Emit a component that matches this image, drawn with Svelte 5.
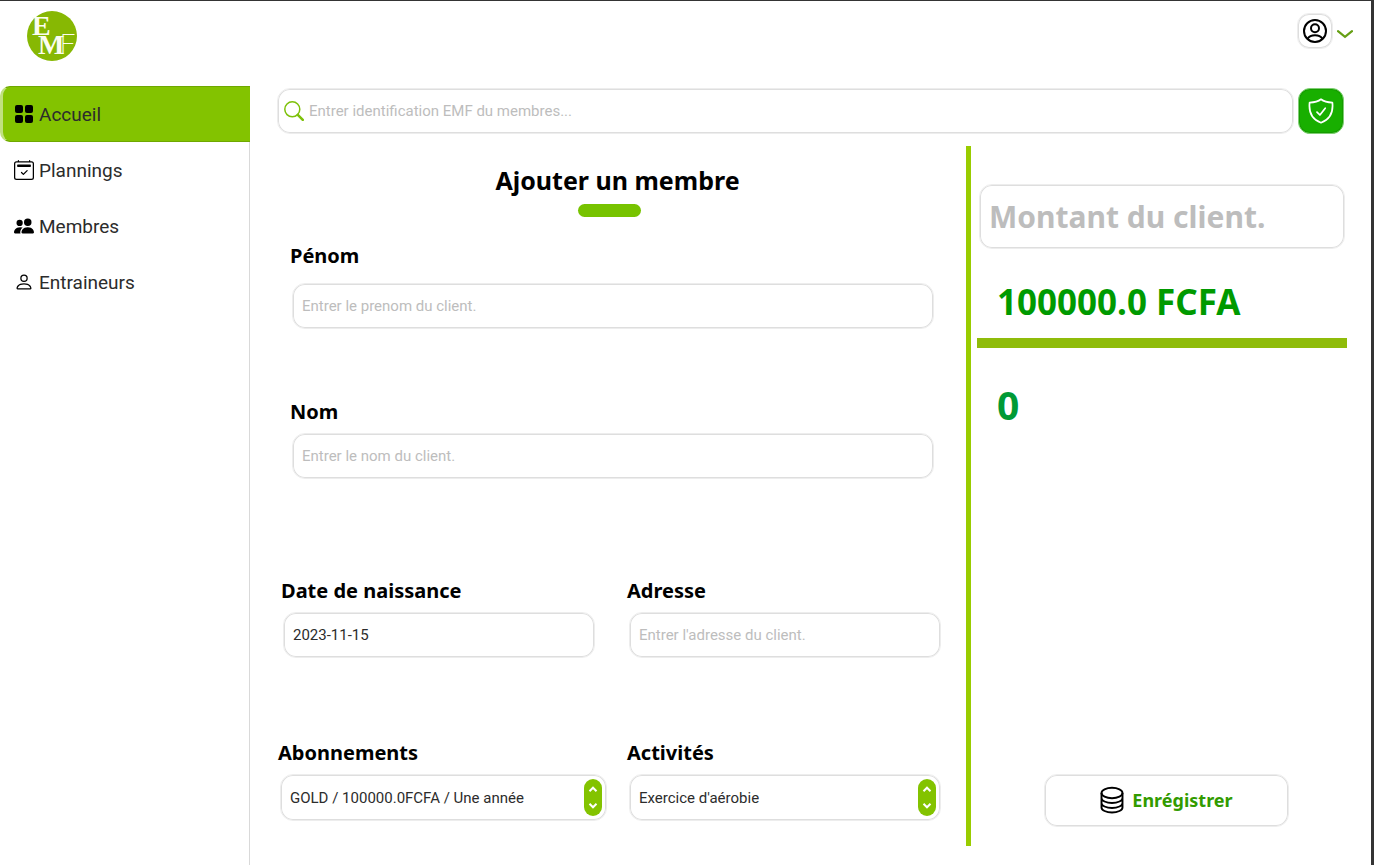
<script>
  let search = $state('');
  let firstName = $state('');
  let lastName = $state('');
  let birthDate = $state('2023-11-15');
  let address = $state('');
  let received = $state('');
  let plan = $state('gold');
  let activity = $state('aerobie');
  let current = $state('accueil');

  const links = [
    { id: 'accueil', label: 'Accueil' },
    { id: 'plannings', label: 'Plannings' },
    { id: 'membres', label: 'Membres' },
    { id: 'entraineurs', label: 'Entraineurs' }
  ];
</script>

{#snippet spinner()}
  <svg class="spinner" viewBox="0 0 18 37" aria-hidden="true">
    <rect width="18" height="37" rx="9" fill="#83c300" />
    <path d="M5.500 12.200 9 8.700 12.500 12.200M5.500 24.800 9 28.300 12.500 24.800" fill="none" stroke="#fff" stroke-width="2" />
  </svg>
{/snippet}

<div class="app">
  <header>
    <a class="logo" href="#accueil" aria-label="EMF">
      <svg width="50" height="50" viewBox="0 0 50 50">
        <circle cx="25" cy="25" r="25" fill="#87b803" />
        <text fill="#fbfdf0" font-size="28">
          <tspan x="5" y="24">E</tspan><tspan x="11" y="43">M</tspan><tspan class="light" x="33" y="43" font-size="27">F</tspan>
        </text>
      </svg>
    </a>
    <button class="account" type="button" aria-label="Compte">
      <span class="avatar">
        <svg width="24" height="24" viewBox="0 0 24 24" fill="none" stroke="#000" stroke-width="2">
          <circle cx="12" cy="12" r="11" />
          <circle cx="12" cy="9.300" r="4" />
          <path d="M4.500 19.800c1.500-2.400 4-3.600 7.500-3.600s6 1.200 7.500 3.600" />
        </svg>
      </span>
      <svg width="16" height="9" viewBox="0 0 16 9" fill="none" stroke="#669f14" stroke-width="2.200" stroke-linecap="round">
        <path d="m1 1.200 7 5.600 7-5.600" />
      </svg>
    </button>
  </header>

  <div class="body">
    <nav>
      {#each links as link (link.id)}
        <a href={'#' + link.id} class:active={current === link.id} onclick={() => (current = link.id)}>
          {#if link.id === 'accueil'}
            <svg width="20" height="20" viewBox="0 0 20 20">
              <rect x="1" y="1" width="8" height="8" rx="2" />
              <rect x="11" y="1" width="8" height="8" rx="2" />
              <rect x="1" y="11" width="8" height="8" rx="2" />
              <rect x="11" y="11" width="8" height="8" rx="2" />
            </svg>
          {:else if link.id === 'plannings'}
            <svg width="20" height="20" viewBox="0 0 16 16">
              <path d="M10.854 8.146a.5.5 0 0 1 0 .708l-3 3a.5.5 0 0 1-.708 0l-1.500-1.500a.5.5 0 0 1 .708-.708L7.500 10.793l2.646-2.647a.5.5 0 0 1 .708 0z" />
              <path d="M3.500 0a.5.5 0 0 1 .5.5V1h8V.5a.5.5 0 0 1 1 0V1h1a2 2 0 0 1 2 2v11a2 2 0 0 1-2 2H2a2 2 0 0 1-2-2V3a2 2 0 0 1 2-2h1V.5a.5.5 0 0 1 .5-.5zM2 2a1 1 0 0 0-1 1v11a1 1 0 0 0 1 1h12a1 1 0 0 0 1-1V3a1 1 0 0 0-1-1H2z" />
              <path d="M2.500 4a.5.5 0 0 1 .5-.5h10a.5.5 0 0 1 .5.5v1a.5.5 0 0 1-.5.5H3a.5.5 0 0 1-.5-.5V4z" />
            </svg>
          {:else if link.id === 'membres'}
            <svg width="20" height="20" viewBox="0 0 16 16">
              <path d="M7 14s-1 0-1-1 1-4 5-4 5 3 5 4-1 1-1 1H7zm4-6a3 3 0 1 0 0-6 3 3 0 0 0 0 6z" />
              <path d="M5.216 14A2.238 2.238 0 0 1 5 13c0-1.355.68-2.750 1.936-3.720A6.325 6.325 0 0 0 5 9c-4 0-5 3-5 4s1 1 1 1h4.216z" />
              <path d="M4.500 8a2.500 2.500 0 1 0 0-5 2.500 2.500 0 0 0 0 5z" />
            </svg>
          {:else}
            <svg width="20" height="20" viewBox="0 0 16 16">
              <path d="M8 8a3 3 0 1 0 0-6 3 3 0 0 0 0 6zm2-3a2 2 0 1 1-4 0 2 2 0 0 1 4 0zm4 8c0 1-1 1-1 1H3s-1 0-1-1 1-4 6-4 6 3 6 4zm-1-.004c-.001-.246-.154-.986-.832-1.664C11.516 10.680 10.289 10 8 10c-2.290 0-3.516.680-4.168 1.332-.678.678-.830 1.418-.832 1.664h10z" />
            </svg>
          {/if}
          <span>{link.label}</span>
        </a>
      {/each}
    </nav>

    <main>
      <form class="search" role="search" onsubmit={(e) => e.preventDefault()}>
        <label class="search-box">
          <svg width="20" height="20" viewBox="0 0 20 20" fill="none" stroke="#7dc10a">
            <circle cx="8.300" cy="8.300" r="7.500" stroke-width="1.500" />
            <path d="m13.800 13.800 5 5" stroke-width="2.600" stroke-linecap="round" />
          </svg>
          <input type="search" bind:value={search} aria-label="Identification EMF" placeholder="Entrer identification EMF du membres..." />
        </label>
        <button class="verify" type="submit" aria-label="Vérifier">
          <svg width="26" height="26" viewBox="0 0 24 24" fill="none" stroke="#fff" stroke-width="1.600" stroke-linecap="round" stroke-linejoin="round">
            <path d="M12 1.200C9.400 3.200 5.500 4.100 1.500 4.300 0.500 13.500 4.500 20 12 22.800 19.500 20 23.500 13.500 22.500 4.300 18.500 4.100 14.600 3.200 12 1.200z" />
            <path d="m8.300 13 2.700 2.700 4.900-6.200" />
          </svg>
        </button>
      </form>

      <form class="content" onsubmit={(e) => e.preventDefault()}>
        <section class="member">
          <h1>Ajouter un membre</h1>
          <div class="accent"></div>

          <div class="field wide first">
            <label for="first-name">Pénom</label>
            <input id="first-name" type="text" bind:value={firstName} placeholder="Entrer le prenom du client." />
          </div>
          <div class="field wide second">
            <label for="last-name">Nom</label>
            <input id="last-name" type="text" bind:value={lastName} placeholder="Entrer le nom du client." />
          </div>
          <div class="pair identity">
            <div class="field">
              <label for="birth">Date de naissance</label>
              <input id="birth" type="text" bind:value={birthDate} />
            </div>
            <div class="field">
              <label for="address">Adresse</label>
              <input id="address" type="text" bind:value={address} placeholder="Entrer l'adresse du client." />
            </div>
          </div>
          <div class="pair options">
            <div class="field">
              <label for="plan">Abonnements</label>
              <div class="choice">
                <select id="plan" bind:value={plan}>
                  <option value="gold">GOLD / 100000.0FCFA / Une année</option>
                </select>
                {@render spinner()}
              </div>
            </div>
            <div class="field">
              <label for="activity">Activités</label>
              <div class="choice">
                <select id="activity" bind:value={activity}>
                  <option value="aerobie">Exercice d'aérobie</option>
                </select>
                {@render spinner()}
              </div>
            </div>
          </div>
        </section>

        <div class="divider"></div>

        <section class="payment">
          <input class="amount" type="text" bind:value={received} aria-label="Montant du client" placeholder="Montant du client." />
          <output class="price">100000.0 FCFA</output>
          <div class="rule"></div>
          <output class="change">0</output>
          <button class="save" type="submit">
            <svg width="24" height="28" viewBox="0 0 24 28" fill="none" stroke="#000" stroke-width="1.900">
              <ellipse cx="12" cy="7" rx="10.500" ry="5.200" />
              <path d="M1.500 7v14.500c0 2.700 4.700 5 10.500 5s10.500-2.300 10.500-5V7M1.500 12c0 2.700 4.700 5 10.500 5s10.500-2.300 10.500-5M1.500 17c0 2.700 4.700 5 10.500 5s10.500-2.300 10.500-5" />
            </svg>
            Enrégistrer
          </button>
        </section>
      </form>
    </main>
  </div>
</div>

<style>
  :global(body) {
    margin: 0;
    background: #fff;
  }
  .app,
  .app * {
    box-sizing: border-box;
  }
  .app {
    display: flex;
    flex-direction: column;
    min-height: 100vh;
    border-top: 1px solid #343434;
    border-right: 3px solid #343434;
    font-family: Roboto, sans-serif;
    color: #2c2c2c;
  }
  header {
    display: flex;
    justify-content: space-between;
    align-items: flex-start;
    height: 85px;
    padding: 10px 18px 0 27px;
  }
  .logo svg {
    display: block;
    overflow: visible;
  }
  .logo text {
    font-family: 'Liberation Serif', serif;
    font-weight: 700;
  }
  .logo .light {
    font-family: Roboto, sans-serif;
    font-weight: 200;
  }
  .account {
    display: flex;
    align-items: center;
    gap: 4px;
    margin-top: 2px;
    padding: 0;
    border: 0;
    background: none;
  }
  .account > svg {
    margin-top: 6px;
  }
  .avatar {
    display: grid;
    place-items: center;
    width: 36px;
    height: 36px;
    border: 1px solid #ededed;
    border-radius: 12px;
    box-shadow: inset 0 0 0 1px #dedede;
  }
  .body {
    display: flex;
    flex: 1;
  }
  nav {
    flex: none;
    width: 250px;
    border-right: 1px solid #d9d9d9;
  }
  nav a {
    display: flex;
    align-items: center;
    gap: 5px;
    height: 56px;
    padding-left: 14px;
    color: #2c2c2c;
    font-size: 19px;
    text-decoration: none;
  }
  nav svg {
    fill: #000;
  }
  nav a.active {
    margin-right: -1px;
    padding-left: 11px;
    border: solid #6fa800;
    border-width: 1px 0;
    border-left: 3px solid #c0e080;
    border-radius: 10px 0 0 10px;
    background: #83c300;
  }
  main {
    flex: 1;
    display: flex;
    flex-direction: column;
    min-width: 0;
    padding: 2px 24px 19px 27px;
  }
  .search {
    display: flex;
    gap: 4px;
    padding-right: 3px;
  }
  .search-box,
  .field input,
  .field select,
  .amount,
  .save {
    border: 1px solid #ededed;
    border-radius: 13px;
    background: #fff;
    box-shadow: inset 0 0 0 1px #dedede;
  }
  .search-box {
    flex: 1;
    display: flex;
    align-items: center;
    gap: 5px;
    height: 46px;
    padding: 0 6px;
  }
  .search-box input {
    flex: 1;
    min-width: 0;
    padding: 0;
    border: 0;
    outline: 0;
    background: none;
    color: #2c2c2c;
    font: 15px Roboto, sans-serif;
  }
  ::placeholder {
    color: #bdbdbd;
    opacity: 1;
  }
  .verify {
    display: grid;
    place-items: center;
    width: 46px;
    height: 46px;
    padding: 0;
    border: 1px solid #7fce73;
    border-radius: 12px;
    background: #18af00;
    box-shadow: inset 0 0 0 1px #169b00;
  }
  .content {
    flex: 1;
    display: grid;
    grid-template-columns: minmax(0, 1fr) 5px 370px;
    column-gap: 6px;
    padding-top: 12px;
  }
  .member {
    margin-right: -6px;
    padding-right: 6px;
  }
  h1 {
    margin: 16px 0 6px;
    padding-right: 2px;
    color: #000;
    font: 700 25px/36px 'Noto Sans', sans-serif;
    text-align: center;
  }
  .accent {
    width: 63px;
    height: 13px;
    margin-left: calc(50% - 41px);
    border-radius: 7px;
    background: #77c300;
  }
  .field {
    display: flex;
    flex-direction: column;
    gap: 7px;
    min-width: 0;
  }
  .field label {
    margin-left: -2px;
    color: #000;
    font: 700 20px/28px 'Noto Sans', sans-serif;
  }
  .field input,
  .field select {
    width: 100%;
    height: 46px;
    padding: 0 9px;
    color: #2c2c2c;
    font: 15px Roboto, sans-serif;
  }
  .wide {
    margin: 0 26px 0 15px;
  }
  .first {
    gap: 13px;
    margin-top: 25px;
  }
  .second {
    margin-top: 69px;
  }
  .pair {
    display: grid;
    margin-right: 19px;
  }
  .identity {
    grid-template-columns: 1fr 1fr;
    gap: 34px;
    margin-top: 98px;
    margin-left: 6px;
  }
  .options {
    grid-template-columns: 327fr 312fr;
    gap: 22px;
    margin-top: 81px;
    margin-left: 3px;
  }
  .choice {
    display: grid;
    align-items: center;
  }
  .choice > * {
    grid-area: 1 / 1;
  }
  .field select {
    height: 47px;
    appearance: none;
  }
  .choice :global(.spinner) {
    justify-self: end;
    width: 18px;
    height: 37px;
    margin-right: 5px;
    pointer-events: none;
  }
  .divider {
    background: #99cc00;
  }
  .payment {
    display: flex;
    flex-direction: column;
  }
  .amount {
    height: 65px;
    margin: 38px 2px 0;
    padding: 0 9px;
    color: #2c2c2c;
    font: 700 30px 'Noto Sans', sans-serif;
  }
  .price,
  .change {
    margin-left: 20px;
    font-family: 'Noto Sans', sans-serif;
    font-weight: 700;
  }
  .price {
    margin-top: 28px;
    color: #009a00;
    font-size: 35px;
    line-height: 50px;
  }
  .rule {
    height: 10px;
    margin-top: 11px;
    background: #8fbc0a;
  }
  .change {
    margin-top: 29px;
    color: #009a36;
    font-size: 39px;
    line-height: 56px;
  }
  .save {
    display: flex;
    align-items: center;
    align-self: center;
    justify-content: center;
    gap: 8px;
    width: 245px;
    height: 53px;
    margin: auto 0 19px 9px;
    padding: 0 0 2px;
    color: #329b00;
    font: 700 18px 'Noto Sans', sans-serif;
  }
</style>
